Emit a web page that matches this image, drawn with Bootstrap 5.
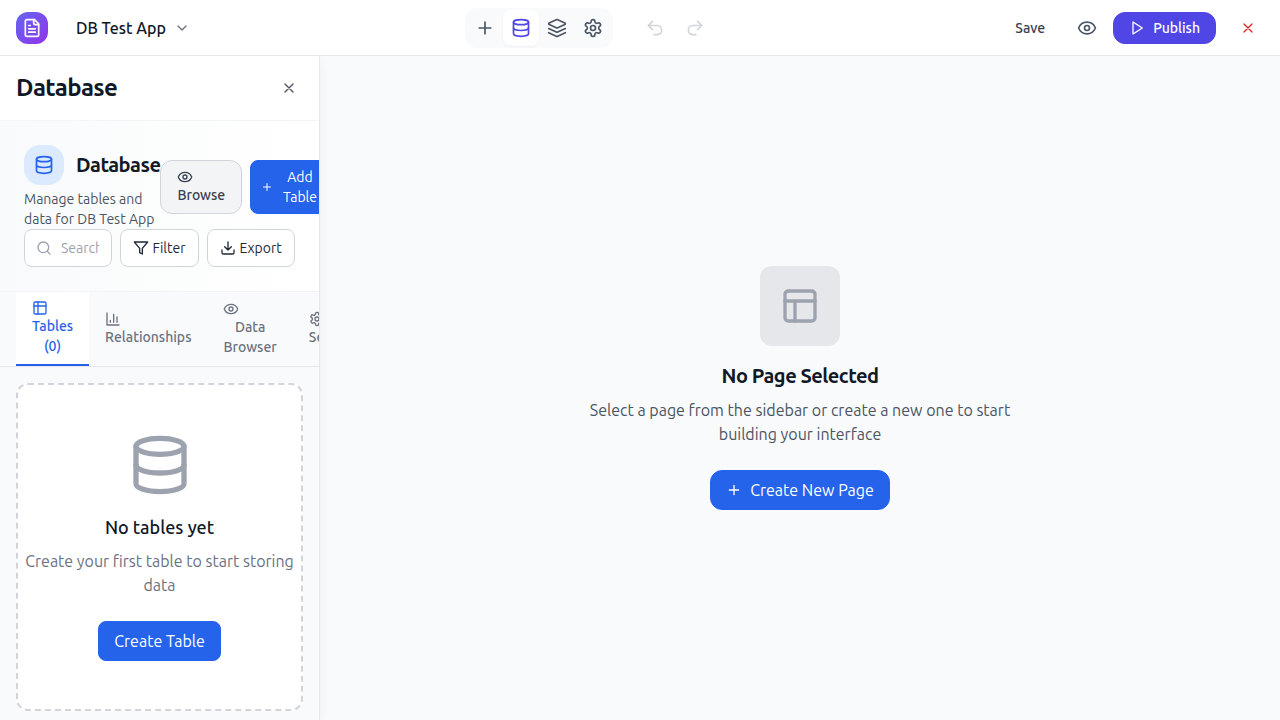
<!DOCTYPE html>
<html lang="en">
<head>
<meta charset="utf-8">
<meta name="viewport" content="width=device-width, initial-scale=1">
<title>DB Test App</title>
<link href="https://cdn.jsdelivr.net/npm/bootstrap@5.3.0/dist/css/bootstrap.min.css" rel="stylesheet">
<style>
  body { font-family: Ubuntu, "Noto Sans", sans-serif; color: #111827; background: #f9fafb; line-height: 1.5; }
  h1, h2, h3, p { margin: 0; }
  h1, h2 { font-weight: 600; }
  svg.ic { width: 16px; height: 16px; fill: none; stroke: currentColor; stroke-width: 2; stroke-linecap: round; stroke-linejoin: round; display: block; flex-shrink: 0; }
  svg.ic-20 { width: 20px; height: 20px; }
  .btn { --bs-btn-font-size: 14px; --bs-btn-line-height: 20px; --bs-btn-border-radius: 8px; --bs-btn-color: #374151; --bs-btn-font-weight: 400; }
  .btn-primary { --bs-btn-bg: #2563eb; --bs-btn-border-color: #2563eb; --bs-btn-color: #fff; --bs-btn-hover-bg: #1d4ed8; }
  .btn-lg-text { --bs-btn-font-size: 16px; --bs-btn-line-height: 24px; --bs-btn-padding-y: 7px; --bs-btn-padding-x: 15px; }
  .topbar { height: 56px; background: #fff; border-bottom: 1px solid #e5e7eb; padding: 0 16px 0 16px; }
  .topbar .side { width: 449px; }
  .logo { width: 32px; height: 32px; border-radius: 12px; background: linear-gradient(135deg, #6366f1, #9333ea); color: #fff; }
  .app-name { font-size: 16px; font-weight: 500; margin-left: 28px; gap: 8px; }
  .tools { background: #f9fafb; border-radius: 12px; padding: 2px; }
  .tool { width: 36px; height: 36px; border: 0; border-radius: 8px; color: #4b5563; background: none; padding: 8px; }
  .tool.active { color: #4f46e5; background: #fff; box-shadow: 0 1px 2px rgba(0,0,0,.05); }
  .history { color: #d1d5db; gap: 20px; margin-left: 32px; }
  .text-14 { font-size: 14px; line-height: 20px; }
  .btn-publish { --bs-btn-bg: #4f46e5; --bs-btn-border-color: #4f46e5; --bs-btn-color: #fff; --bs-btn-border-radius: 12px; --bs-btn-padding-x: 15px; --bs-btn-padding-y: 5px; --bs-btn-font-weight: 500; }
  .sidebar { width: 320px; border-right: 1px solid #e5e7eb; box-shadow: 0 4px 12px rgba(0,0,0,.05); z-index: 1; }
  .side-head { height: 65px; background: #fff; border-bottom: 1px solid #f3f4f6; padding: 0 22px 0 16px; }
  .side-head h1 { font-size: 24px; line-height: 32px; letter-spacing: -.6px; }
  .db-head { padding: 24px; background: linear-gradient(to right, #f9fafb, #fff); border-bottom: 1px solid #f3f4f6; height: 171px; }
  .db-icon { width: 40px; height: 40px; border-radius: 16px; background: #dbeafe; color: #2563eb; }
  .db-copy { width: 136px; flex-shrink: 0; }
  .db-copy h2 { font-size: 20px; line-height: 28px; letter-spacing: -.5px; }
  .db-copy p { color: #4b5563; margin-top: 4px; }
  .btn-browse { --bs-btn-bg: #f3f4f6; --bs-btn-border-color: #d1d5db; --bs-btn-font-weight: 500; --bs-btn-border-radius: 12px; width: 82px; height: 54px; padding: 8px 16px 8px 16.4px; text-align: left; }
  .btn-add { width: 80px; height: 54px; padding: 6px 10px; gap: 8px; }
  .search { width: 88px; height: 38px; border: 1px solid #d1d5db; border-radius: 8px; background: #fff; padding: 0 12px 0 11px; gap: 9px; color: #9ca3af; }
  .search input { border: 0; padding: 0; width: 38px; outline: 0; background: none; }
  .search input::placeholder { color: #9ca3af; }
  .btn-tool { --bs-btn-bg: #fff; --bs-btn-border-color: #d1d5db; --bs-btn-color: #1f2937; padding: 8px 12.4px 8px 12px; gap: 3.6px; height: 38px; }
  .nav-tabs-db { height: 75px; border-bottom: 1px solid #e5e7eb; padding-left: 16px; font-weight: 500; }
  .tab-item { border: 0; border-bottom: 2px solid transparent; background: none; color: #6b7280; padding: 0 16px; flex-shrink: 0; height: 74px; font-weight: 500; }
  .tab-item.active { color: #2563eb; background: #fff; border-bottom-color: #2563eb; }
  .tab-item:not(.active) { padding-top: 1px; }
  .empty-box { margin: 16px; border: 2px dashed #d1d5db; border-radius: 12px; background: #fff; padding: 48px 0; }
  .empty-box svg.ic { width: 64px; height: 64px; color: #9ca3af; margin: 0 auto 16px; }
  .empty-box h3 { font-size: 18px; line-height: 28px; font-weight: 500; }
  .empty-box p { color: #6b7280; margin: 8px 0 24px; }
  .blank { width: 448px; }
  .blank-icon { width: 80px; height: 80px; border-radius: 12px; background: #e5e7eb; color: #9ca3af; }
  .blank-icon svg.ic { width: 40px; height: 40px; }
  .blank h2 { font-size: 20px; line-height: 28px; margin: 16px 0 8px; letter-spacing: -.5px; }
  .blank p { color: #4b5563; margin-bottom: 24px; }
  .blank .btn { --bs-btn-border-radius: 12px; }
  .ink-gray { color: #6b7280; }
  .ink-dark { color: #4b5563; }
  .ink-red { color: #dc2626; }
  .save-link { color: #374151; font-weight: 500; }
</style>
</head>
<body class="vh-100 overflow-hidden d-flex flex-column">
<svg class="d-none">
  <symbol id="file" viewBox="0 0 24 24"><path d="M15 2H6a2 2 0 0 0-2 2v16a2 2 0 0 0 2 2h12a2 2 0 0 0 2-2V7Z"/><path d="M14 2v4a2 2 0 0 0 2 2h4M10 9H8M16 13H8M16 17H8"/></symbol>
  <symbol id="chev" viewBox="0 0 24 24"><path d="m6 9 6 6 6-6"/></symbol>
  <symbol id="plus" viewBox="0 0 24 24"><path d="M5 12h14M12 5v14"/></symbol>
  <symbol id="db" viewBox="0 0 24 24"><ellipse cx="12" cy="5" rx="9" ry="3"/><path d="M3 5v14a9 3 0 0 0 18 0V5"/><path d="M3 12a9 3 0 0 0 18 0"/></symbol>
  <symbol id="layers" viewBox="0 0 24 24"><path d="m12.83 2.18a2 2 0 0 0-1.66 0L2.6 6.08a1 1 0 0 0 0 1.83l8.58 3.91a2 2 0 0 0 1.66 0l8.58-3.9a1 1 0 0 0 0-1.83Z"/><path d="m22 17.65-9.17 4.16a2 2 0 0 1-1.66 0L2 17.65"/><path d="m22 12.65-9.17 4.16a2 2 0 0 1-1.66 0L2 12.65"/></symbol>
  <symbol id="gear" viewBox="0 0 24 24"><path d="M12.22 2h-.44a2 2 0 0 0-2 2v.18a2 2 0 0 1-1 1.73l-.43.25a2 2 0 0 1-2 0l-.15-.08a2 2 0 0 0-2.73.73l-.22.38a2 2 0 0 0 .73 2.73l.15.1a2 2 0 0 1 1 1.72v.51a2 2 0 0 1-1 1.74l-.15.09a2 2 0 0 0-.73 2.73l.22.38a2 2 0 0 0 2.73.73l.15-.08a2 2 0 0 1 2 0l.43.25a2 2 0 0 1 1 1.73V20a2 2 0 0 0 2 2h.44a2 2 0 0 0 2-2v-.18a2 2 0 0 1 1-1.73l.43-.25a2 2 0 0 1 2 0l.15.08a2 2 0 0 0 2.73-.73l.22-.39a2 2 0 0 0-.73-2.73l-.15-.08a2 2 0 0 1-1-1.74v-.5a2 2 0 0 1 1-1.74l.15-.09a2 2 0 0 0 .73-2.73l-.22-.38a2 2 0 0 0-2.73-.73l-.15.08a2 2 0 0 1-2 0l-.43-.25a2 2 0 0 1-1-1.73V4a2 2 0 0 0-2-2z"/><circle cx="12" cy="12" r="3"/></symbol>
  <symbol id="undo" viewBox="0 0 24 24"><path d="M9 14 4 9l5-5"/><path d="M4 9h10.5a5.5 5.5 0 0 1 0 11H11"/></symbol>
  <symbol id="redo" viewBox="0 0 24 24"><path d="m15 14 5-5-5-5"/><path d="M20 9H9.5a5.5 5.5 0 0 0 0 11H13"/></symbol>
  <symbol id="eye" viewBox="0 0 24 24"><path d="M2.06 12.35a1 1 0 0 1 0-.7 10.75 10.75 0 0 1 19.88 0 1 1 0 0 1 0 .7 10.75 10.75 0 0 1-19.88 0"/><circle cx="12" cy="12" r="3"/></symbol>
  <symbol id="play" viewBox="0 0 24 24"><path d="m6 3 14 9-14 9z"/></symbol>
  <symbol id="x" viewBox="0 0 24 24"><path d="M18 6 6 18M6 6l12 12"/></symbol>
  <symbol id="search" viewBox="0 0 24 24"><circle cx="11" cy="11" r="8"/><path d="m21 21-4.3-4.3"/></symbol>
  <symbol id="filter" viewBox="0 0 24 24"><path d="M22 3H2l8 9.46V19l4 2v-8.54z"/></symbol>
  <symbol id="download" viewBox="0 0 24 24"><path d="M21 15v4a2 2 0 0 1-2 2H5a2 2 0 0 1-2-2v-4M7 10l5 5 5-5M12 15V3"/></symbol>
  <symbol id="table" viewBox="0 0 24 24"><rect x="3" y="3" width="18" height="18" rx="2"/><path d="M3 9h18M9 3v18"/></symbol>
  <symbol id="layout" viewBox="0 0 24 24"><rect x="3" y="3" width="18" height="18" rx="2"/><path d="M3 9h18M9 21V9"/></symbol>
  <symbol id="chart" viewBox="0 0 24 24"><path d="M3 3v18h18M18 17V9M13 17V5M8 17v-3"/></symbol>
</svg>

<header class="topbar d-flex align-items-center flex-shrink-0">
  <div class="side d-flex align-items-center">
    <div class="logo d-flex align-items-center justify-content-center"><svg class="ic ic-20"><use href="#file"/></svg></div>
    <div class="app-name d-flex align-items-center">DB Test App <svg class="ic ink-gray"><use href="#chev"/></svg></div>
  </div>
  <div class="tools d-flex">
    <button class="tool"><svg class="ic ic-20"><use href="#plus"/></svg></button>
    <button class="tool active"><svg class="ic ic-20"><use href="#db"/></svg></button>
    <button class="tool"><svg class="ic ic-20"><use href="#layers"/></svg></button>
    <button class="tool"><svg class="ic ic-20"><use href="#gear"/></svg></button>
  </div>
  <div class="history d-flex"><svg class="ic ic-20"><use href="#undo"/></svg><svg class="ic ic-20"><use href="#redo"/></svg></div>
  <div class="d-flex align-items-center ms-auto">
    <span class="text-14 save-link me-4 pe-2">Save</span>
    <svg class="ic ic-20 ink-dark me-3"><use href="#eye"/></svg>
    <button class="btn btn-publish d-flex align-items-center gap-2"><svg class="ic"><use href="#play"/></svg>Publish</button>
    <svg class="ic ink-red ms-4 me-2"><use href="#x"/></svg>
  </div>
</header>

<div class="d-flex flex-grow-1 overflow-hidden">
  <aside class="sidebar flex-shrink-0 position-relative">
   <div class="overflow-hidden h-100">
    <div class="side-head d-flex align-items-center justify-content-between">
      <h1>Database</h1><svg class="ic ink-dark"><use href="#x"/></svg>
    </div>
    <div class="db-head">
      <div class="d-flex align-items-center">
        <div class="db-copy">
          <div class="d-flex align-items-center">
            <div class="db-icon d-flex align-items-center justify-content-center flex-shrink-0 me-2"><svg class="ic ic-20"><use href="#db"/></svg></div>
            <h2 class="ms-1">Database</h2>
          </div>
          <p class="text-14">Manage tables and data for DB Test App</p>
        </div>
        <button class="btn btn-browse flex-shrink-0 me-2"><svg class="ic"><use href="#eye"/></svg>Browse</button>
        <button class="btn btn-primary btn-add d-flex align-items-center flex-shrink-0"><svg class="ic" style="width:12px"><use href="#plus"/></svg><span class="flex-grow-1">Add Table</span></button>
      </div>
      <div class="d-flex gap-2">
        <div class="search d-flex align-items-center flex-shrink-0"><svg class="ic"><use href="#search"/></svg><input class="text-14" placeholder="Search tables..."></div>
        <button class="btn btn-tool d-flex align-items-center flex-shrink-0"><svg class="ic"><use href="#filter"/></svg>Filter</button>
        <button class="btn btn-tool d-flex align-items-center flex-shrink-0"><svg class="ic"><use href="#download"/></svg>Export</button>
      </div>
    </div>
    <div class="nav-tabs-db d-flex text-14 overflow-hidden">
      <button class="tab-item active"><svg class="ic"><use href="#table"/></svg>Tables<br>(0)</button>
      <button class="tab-item"><svg class="ic"><use href="#chart"/></svg>Relationships</button>
      <button class="tab-item"><svg class="ic"><use href="#eye"/></svg>Data<br>Browser</button>
      <button class="tab-item"><svg class="ic"><use href="#gear"/></svg>Settings</button>
    </div>
    <div class="empty-box text-center">
      <svg class="ic"><use href="#db"/></svg>
      <h3>No tables yet</h3>
      <p>Create your first table to start storing data</p>
      <button class="btn btn-primary btn-lg-text">Create Table</button>
    </div>
   </div>
  </aside>
  <main class="flex-grow-1 d-flex align-items-center justify-content-center">
    <div class="blank text-center d-flex flex-column align-items-center">
      <div class="blank-icon d-flex align-items-center justify-content-center"><svg class="ic"><use href="#layout"/></svg></div>
      <h2>No Page Selected</h2>
      <p>Select a page from the sidebar or create a new one to start building your interface</p>
      <button class="btn btn-primary btn-lg-text d-flex align-items-center gap-2"><svg class="ic"><use href="#plus"/></svg>Create New Page</button>
    </div>
  </main>
</div>
<script src="https://cdn.jsdelivr.net/npm/bootstrap@5.3.0/dist/js/bootstrap.bundle.min.js"></script>
</body>
</html>
